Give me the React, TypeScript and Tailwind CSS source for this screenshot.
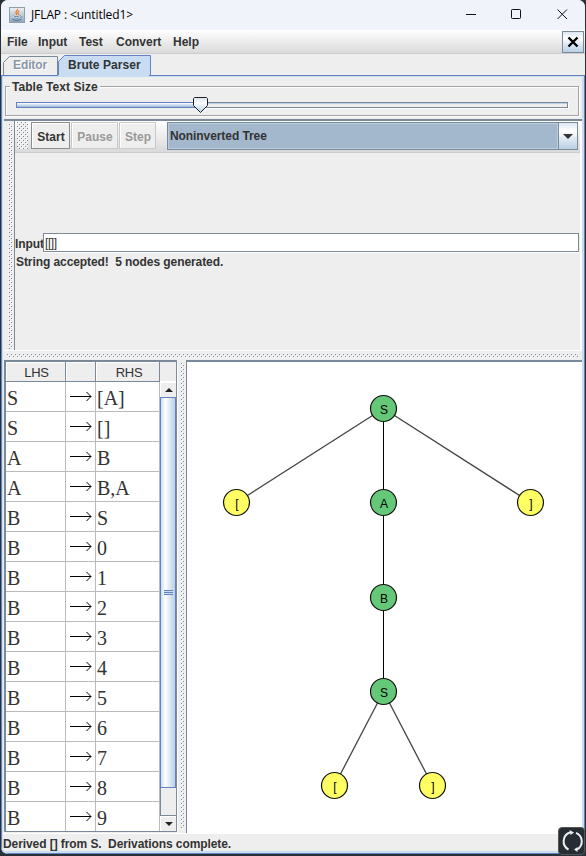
import React from 'react';

const dots =
  'bg-[conic-gradient(at_1px_1px,transparent_75%,#7a8a99_0),conic-gradient(at_1px_1px,transparent_75%,#7a8a99_0),conic-gradient(at_1px_1px,transparent_75%,#ffffff_0),conic-gradient(at_1px_1px,transparent_75%,#ffffff_0)] bg-[length:4px_4px] [background-position:0_0,2px_2px,1px_1px,3px_3px]';

const rules = [
  ['S', '[A]'], ['S', '[]'], ['A', 'B'], ['A', 'B,A'], ['B', 'S'],
  ['B', '0'], ['B', '1'], ['B', '2'], ['B', '3'], ['B', '4'],
  ['B', '5'], ['B', '6'], ['B', '7'], ['B', '8'], ['B', '9'],
];

const nodes: [number, number, string, boolean][] = [
  [196.5, 46.5, 'S', true], [49.5, 140.5, '[', false], [196.5, 140.5, 'A', true],
  [343.5, 140.5, ']', false], [196.5, 235.5, 'B', true], [196.5, 329.5, 'S', true],
  [147.5, 423.5, '[', false], [245.5, 423.5, ']', false],
];
const edges = [[0, 1], [0, 2], [0, 3], [2, 4], [4, 5], [5, 6], [5, 7]];

function JavaIcon() {
  return (
    <svg width="16" height="16" viewBox="0 0 16 16" className="block">
      <defs>
        <linearGradient id="jv" x1="0" y1="0" x2="0" y2="1">
          <stop offset="0" stopColor="#edf1f5" />
          <stop offset="1" stopColor="#8ba5b8" />
        </linearGradient>
      </defs>
      <rect x=".5" y=".5" width="15" height="15" fill="url(#jv)" stroke="#8e9eab" />
      <path d="M4 8.300H11.500C13.500 8.300 13.300 10.500 11 10.500C10 12.500 5.500 12.500 4.500 10.500Z" fill="#f4f7fa" />
      <path d="M8.5 1.8c1 1.7-2.8 2.5-1.4 4.3.6.8.8 1.3.3 2M10.3 4c-2 1-1.5 1.6-1 2.4.4.7.1 1.2-.5 1.7" fill="none" stroke="#ef7d25" strokeWidth="1.3" />
      <path d="M4.5 8.8c1.2.8 4.8.8 6.2.1M5 10.8c1.5.6 4 .6 5.2 0M11.3 8.7c1.5-.1 1.3 1.6-.4 2M3.5 12.4c2 1.4 7.3 1.2 9-.2" fill="none" stroke="#456f9a" />
    </svg>
  );
}

function TitleBar() {
  return (
    <div className="flex h-[30px] items-center bg-[#f0f3f9] pl-2">
      <JavaIcon />
      <span className="ml-[6px] grow font-['Open_Sans',sans-serif] text-[12px] font-normal tracking-[-0.1px] text-black">JFLAP : &lt;untitled1&gt;</span>
      <svg width="110" height="30" className="mr-[9px] block" fill="none" stroke="#111">
        <path d="M0 14.5h10" />
        <rect x="45.5" y="9.5" width="9" height="9" rx=".8" />
        <path d="M91.500 9.500L101 19M101 9.500L91.500 19" />
      </svg>
    </div>
  );
}

function MenuBar() {
  return (
    <div className="flex h-[24px] items-center border-b border-[#ccc] bg-gradient-to-b from-white to-[#dadada] pl-[6px]">
      <span className="w-[31px]">File</span>
      <span className="w-[41px]">Input</span>
      <span className="w-[37px]">Test</span>
      <span className="w-[57px]">Convert</span>
      <span className="grow">Help</span>
      <div className="mr-px flex h-[22px] w-[22px] items-center justify-center border border-[#7a8a99] bg-gradient-to-b from-[#dde8f3] via-white via-30% to-[#b8cfe5]">
        <svg width="12" height="12" stroke="#000" strokeWidth="2.4"><path d="M1.5 1.5l9 9M10.5 1.5l-9 9" /></svg>
      </div>
    </div>
  );
}

function Tabs() {
  return (
    <div className="flex h-[21px] items-end pl-[2px]">
      <div className="relative h-[19px] w-[55px]">
        <svg width="55" height="19" className="absolute inset-0"><path d="M.5 19V6.500L6.500 .5H54.500V19" fill="#eee" stroke="#7a8a99" /></svg>
        <span className="relative block pt-px pl-[10px] leading-[16px] tracking-[-.1px] text-[#8a98a8] [text-shadow:1px_1px_0_white]">Editor</span>
      </div>
      <div className="relative h-[20px] w-[93px]">
        <svg width="93" height="20" className="absolute inset-0"><path d="M.5 20V6.500L6.500 .5H92.500V20" fill="#c8ddf2" stroke="#6382bf" /></svg>
        <span className="relative block pt-[2px] pl-[10px] leading-[17px] tracking-[.05px]">Brute Parser</span>
      </div>
    </div>
  );
}

function SizeSlider() {
  return (
    <div className="h-[42px] pt-[9px] pr-[3px] pl-px">
      <div className="relative h-[30px] border border-[#a3a3a3] shadow-[inset_1px_1px_0_white,1px_1px_0_white]">
        <span className="absolute top-[-7px] left-[4px] bg-[#eee] px-[2px] leading-[14px] tracking-[.05px]">Table Text Size</span>
        <div className="mt-[15px] ml-[10px] flex h-[6px] w-[552px]">
          <div className="w-[184px] border border-r-0 border-[#6382bf] bg-gradient-to-b from-white to-[#9ab8d8]" />
          <div className="grow border border-l-0 border-[#7a8a99] shadow-[inset_0_1px_0_#b8cfe5,1px_1px_0_white]" />
        </div>
        <svg width="16" height="17" className="absolute top-[10px] left-[187px]">
          <defs><linearGradient id="th" x1="0" y1="0" x2="0" y2="1"><stop offset="0" stopColor="#d2e1f0" /><stop offset=".35" stopColor="#fff" /><stop offset="1" stopColor="#b8cfe5" /></linearGradient></defs>
          <path d="M.5 1.500L1.500 .5H13.500L14.500 1.500V8.500L7.500 15.500L.5 8.500Z" fill="url(#th)" stroke="#222" />
        </svg>
      </div>
    </div>
  );
}

function ToolButton({ label, disabled, width }: { label: string; disabled?: boolean; width: string }) {
  return (
    <div className={`${width} h-[27px] border bg-[#eee] pt-px pl-px text-center leading-[26px] shadow-[inset_1px_1px_0_white] ${disabled ? 'border-[#c9c9c9] text-[#999]' : 'border-[#8c8c8c]'}`}>
      {label}
    </div>
  );
}

function UpperPane() {
  return (
    <div className="flex h-[231px] border-t-2 border-[#7a8a99]">
      <div className="w-[11px] shrink-0 border-r border-[#7a8a99] pl-[5px]">
        <div className={`mt-[3px] h-[226px] w-[4px] ${dots}`} />
      </div>
      <div className="flex grow flex-col border-r-2 border-white">
        <div className="flex h-[32px] border-b border-[#ccc] bg-gradient-to-b from-white to-[#dadada] pl-[2px]">
          <div className={`mt-px h-[27px] w-[11px] bg-[#eee] ${dots}`} />
          <div className="mt-px ml-[3px] flex items-start gap-px">
            <ToolButton label="Start" width="w-[39px]" />
            <ToolButton label="Pause" width="w-[47px]" disabled />
            <ToolButton label="Step" width="w-[37px]" disabled />
          </div>
          <div className="mt-px mr-[2px] ml-[11px] flex h-[28px] grow border border-[#7a8a99]">
            <div className="grow border border-[#b8cfe5] bg-[#a3b8cd] pl-px leading-[25px] tracking-[-.08px]">Noninverted Tree</div>
            <div className="flex w-[19px] items-center justify-center border-l border-[#7a8a99] bg-gradient-to-b from-[#dde8f3] via-white via-30% to-[#b8cfe5]">
              <svg width="10" height="5"><path d="M0 0H10L5 5Z" fill="#333" /></svg>
            </div>
          </div>
        </div>
        <div className="mt-[80px] flex h-[20px]">
          <span className="w-[28px] pt-[2px] leading-[18px] tracking-[-.1px]">Input</span>
          <div className="mr-px h-[19px] grow border border-[#7a8a99] bg-white pl-px font-normal leading-[19px] tracking-[-.4px] shadow-[0_1px_0_white]">[[]]</div>
        </div>
        <span className="pt-px pl-px leading-[16px] tracking-[-.08px] whitespace-pre">String accepted!  5 nodes generated.</span>
      </div>
    </div>
  );
}

function RuleTable() {
  return (
    <div className="flex h-[472px] w-[173px] border-t-2 border-r border-b border-l-2 border-[#7a8a99]">
      <div className="w-[154px] bg-white">
        <div className="flex h-[20px] text-center text-[13px] font-normal leading-[21px]">
          <div className="w-[60px] border-r border-b border-[#7a8a99] bg-[#eee] pl-[2px] tracking-[-.3px] shadow-[inset_1px_1px_0_white]">LHS</div>
          <div className="w-[30px] border-r border-b border-[#7a8a99] bg-[#eee] shadow-[inset_1px_1px_0_white]" />
          <div className="w-[64px] border-r border-b border-[#7a8a99] bg-[#eee] pl-[3px] tracking-[-.3px] shadow-[inset_1px_1px_0_white]">RHS</div>
        </div>
        {rules.map(([l, r], i) => (
          <div key={i} className="flex h-[30px] border-b border-[#bbb] font-['Liberation_Serif',serif] text-[20px] font-normal leading-[33px] last:h-[29px] last:border-b-0">
            <div className="w-[60px] border-r border-[#bbb] pl-px">{l}</div>
            <div className="flex w-[30px] items-center border-r border-[#bbb] pl-[4px]">
              <svg width="22" height="11" fill="none" stroke="#000"><path d="M0 5.500H21M16.500 1L21 5.500L16.500 10" /></svg>
            </div>
            <div className="w-[64px] border-r border-[#bbb] pl-px">{r}</div>
          </div>
        ))}
      </div>
      <div className="flex w-[16px] flex-col">
        <div className="h-[20px] border-b border-white" />
        <div className="flex h-[15px] items-center justify-center border-t border-l border-white">
          <svg width="8" height="4"><path d="M0 4L4 0L8 4Z" fill="#222" /></svg>
        </div>
        <div className="flex h-[391px] items-center justify-center border border-[#6382bf] bg-gradient-to-r from-[#c8ddf2] via-white via-30% to-[#b8cfe5]">
          <div className="h-[5px] w-[9px] border-y border-[#6382bf] bg-[linear-gradient(#c8ddf2_1px,#6382bf_1px,#6382bf_2px,#c8ddf2_2px)]" />
        </div>
        <div className="h-[28px] border-b border-l border-[#7a8a99]" />
        <div className="flex h-[15px] items-center justify-center border-t border-l border-white">
          <svg width="8" height="4"><path d="M0 0H8L4 4Z" fill="#222" /></svg>
        </div>
      </div>
    </div>
  );
}

function DerivationTree() {
  return (
    <svg width="395" height="472" viewBox="0 0 395 472" className="block bg-white">
      {edges.map(([a, b], i) => (
        <line key={i} x1={nodes[a][0]} y1={nodes[a][1]} x2={nodes[b][0]} y2={nodes[b][1]} stroke={nodes[a][0] === nodes[b][0] ? '#000' : '#444'} strokeWidth={nodes[a][0] === nodes[b][0] ? 1 : 1.3} />
      ))}
      {nodes.map(([x, y, t, inner], i) => (
        <g key={i}>
          <circle cx={x} cy={y} r="13" fill={inner ? '#64c878' : '#ffff64'} stroke="#111" strokeWidth="1.2" />
          <text x={x + 0.5} y={y + 5.5} textAnchor="middle" fontSize="12" fontWeight="400" fill="#000">{t}</text>
        </g>
      ))}
    </svg>
  );
}

export default function App() {
  return (
    <div className="relative h-[856px] w-[586px] overflow-hidden bg-[#283038] font-['Liberation_Sans',Arial,sans-serif] text-[12px] font-bold text-[#333]">
      <div className="ml-px h-[854px] w-[584px] overflow-hidden rounded-[7px] bg-[#eee]">
        <TitleBar />
        <MenuBar />
        <Tabs />
        <div className="h-[779px] rounded-b-[7px] border-x border-b border-[#6382bf]">
          <div className="flex h-[2px] bg-[#c8ddf2]">
            <div className="h-px w-[56px] bg-[#6382bf]" />
            <div className="w-[91px]" />
            <div className="h-px grow bg-[#6382bf]" />
          </div>
          <div className="h-[776px] border-r-2 border-b-2 border-l border-[#c8ddf2]">
            <div className="pl-px">
              <SizeSlider />
              <UpperPane />
              <div className="h-[10px] border-t border-white pt-[3px] pl-[3px]">
                <div className={`h-[4px] w-[572px] ${dots}`} />
              </div>
              <div className="flex h-[473px]">
                <RuleTable />
                <div className="w-[9px] border-l border-white pl-[3px]">
                  <div className={`mt-[3px] h-[466px] w-[4px] ${dots}`} />
                </div>
                <div className="h-[473px] overflow-hidden border-t-2 border-l border-[#7a8a99] bg-white"><DerivationTree /></div>
              </div>
              <div className="-ml-px border-t border-white pt-[2px] leading-[16px] tracking-[-.08px] whitespace-pre">Derived [] from S.  Derivations complete.</div>
            </div>
          </div>
        </div>
      </div>
      <div className="absolute right-px bottom-px h-[28px] w-[27px] rounded-[4px] border border-[#555] bg-[#252c33]">
        <svg width="25" height="26" fill="none" stroke="#eee" strokeWidth="2">
          <path d="M11 4.500A9.300 9.300 0 0 0 9.500 21.500" />
          <path d="M17 4.800A9.300 9.300 0 0 1 18 21.500" />
          <path d="M10.500 2L15 4.500L11.500 7ZM18.500 24L15 21.500L18.500 19Z" fill="#eee" stroke="none" />
        </svg>
      </div>
    </div>
  );
}
